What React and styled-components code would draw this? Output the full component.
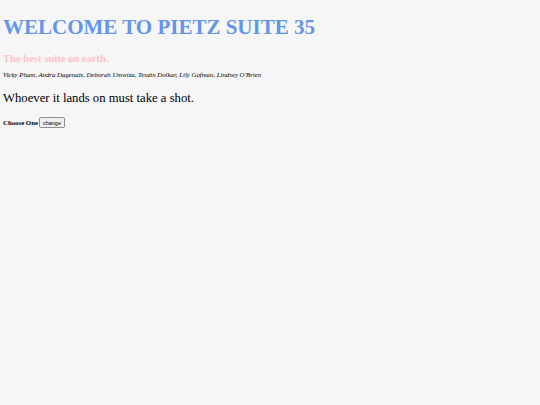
import React from "react";
import styled, { createGlobalStyle } from "styled-components";

const Global = createGlobalStyle`
  html, body { margin: 0; padding: 0; background: #f6f6f6; }
  body { font-family: "Liberation Serif", "Times New Roman", serif; color: #000; }
`;

const Page = styled.div`
  padding: 17px 3px 0 3px;
  display: flex;
  flex-direction: column;
  align-items: flex-start;
`;

const Title = styled.h1`
  margin: 0;
  font-size: 21px;
  line-height: 21px;
  font-weight: bold;
  color: cornflowerblue;
`;

const Subtitle = styled.h2`
  margin: 15px 0 0 0;
  font-size: 10.6px;
  line-height: 11px;
  font-weight: bold;
  color: pink;
`;

const Names = styled.p`
  margin: 7px 0 0 0;
  font-size: 6.8px;
  line-height: 7px;
  font-style: italic;
`;

const Rule = styled.p`
  margin: 14px 0 0 0;
  font-size: 12.7px;
  line-height: 13px;
`;

const Row = styled.div`
  margin-top: 12px;
  display: flex;
  align-items: center;
  gap: 1px;
`;

const Label = styled.span`
  font-size: 6.8px;
  font-weight: bold;
`;

const Button = styled.button`
  font-family: "Liberation Sans", Arial, sans-serif;
  font-size: 5.5px;
  line-height: 6px;
  padding: 1.5px 3px;
  background: #efefef;
  border: 1px solid #8f8f8f;
  border-radius: 2px;
  color: #000;
`;

export default function App() {
  return (
    <>
      <Global />
      <Page>
        <Title>WELCOME TO PIETZ SUITE 35</Title>
        <Subtitle>The best suite on earth.</Subtitle>
        <Names>Vicky Pham, Andra Dagenais, Deborah Umwiza, Tenzin Dolkar, Lily Gofman, Lindsey O'Brien</Names>
        <Rule>Whoever it lands on must take a shot.</Rule>
        <Row>
          <Label>Choose One</Label>
          <Button>change</Button>
        </Row>
      </Page>
    </>
  );
}
